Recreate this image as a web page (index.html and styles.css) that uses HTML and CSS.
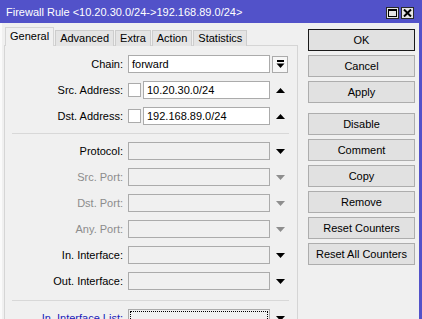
FILE: index.html
```html
<!DOCTYPE html>
<html lang="en">
<head>
  <meta charset="UTF-8" />
  <title>Firewall Rule</title>
  <link rel="stylesheet" href="styles.css">
</head>
<body>
  <!-- Title bar -->
  <div class="titlebar">
    <span class="title">Firewall Rule &lt;10.20.30.0/24-&gt;192.168.89.0/24&gt;</span>
    <div class="winbtns">
      <span class="winbtn">
        <svg width="9" height="8" viewBox="0 0 9 8"><rect x="0.5" y="0.5" width="8" height="7" fill="none" stroke="#000"/><rect x="0" y="0" width="9" height="2" fill="#000"/></svg>
      </span>
      <span class="winbtn">
        <svg width="9" height="8" viewBox="0 0 9 8"><path d="M1 0.5 L8 7.5 M8 0.5 L1 7.5" stroke="#000" stroke-width="2"/></svg>
      </span>
    </div>
  </div>

  <div class="main">
    <!-- Tabs + form -->
    <div class="left">
      <div class="tabs">
        <div class="tab active">General</div>
        <div class="tab">Advanced</div>
        <div class="tab">Extra</div>
        <div class="tab">Action</div>
        <div class="tab">Statistics</div>
      </div>

      <div class="panel">
        <div class="row first">
          <span class="lbl">Chain:</span>
          <div class="field"><div class="input white">forward</div></div>
          <div class="side">
            <span class="dropbtn">
              <svg width="9" height="9" viewBox="0 0 9 9"><rect x="1" y="0" width="7" height="2" fill="#000"/><polygon points="0.5,3.5 8.5,3.5 4.5,8" fill="#000"/></svg>
            </span>
          </div>
        </div>
        <div class="row">
          <span class="lbl">Src. Address:</span>
          <div class="field"><span class="check"></span><div class="input white grow">10.20.30.0/24</div></div>
          <div class="side"><svg class="arrow" width="9" height="5" viewBox="0 0 9 5"><polygon points="0,5 9,5 4.5,0" fill="#000"/></svg></div>
        </div>
        <div class="row">
          <span class="lbl">Dst. Address:</span>
          <div class="field"><span class="check"></span><div class="input white grow">192.168.89.0/24</div></div>
          <div class="side"><svg class="arrow" width="9" height="5" viewBox="0 0 9 5"><polygon points="0,5 9,5 4.5,0" fill="#000"/></svg></div>
        </div>

        <div class="sep sep-a"></div>

        <div class="row">
          <span class="lbl">Protocol:</span>
          <div class="field"><div class="input"></div></div>
          <div class="side"><svg class="arrow" width="9" height="5" viewBox="0 0 9 5"><polygon points="0,0 9,0 4.5,5" fill="#000"/></svg></div>
        </div>
        <div class="row">
          <span class="lbl dim">Src. Port:</span>
          <div class="field"><div class="input"></div></div>
          <div class="side"><svg class="arrow" width="9" height="5" viewBox="0 0 9 5"><polygon points="0,0 9,0 4.5,5" fill="#8e8e8e"/></svg></div>
        </div>
        <div class="row">
          <span class="lbl dim">Dst. Port:</span>
          <div class="field"><div class="input"></div></div>
          <div class="side"><svg class="arrow" width="9" height="5" viewBox="0 0 9 5"><polygon points="0,0 9,0 4.5,5" fill="#8e8e8e"/></svg></div>
        </div>
        <div class="row">
          <span class="lbl dim">Any. Port:</span>
          <div class="field"><div class="input"></div></div>
          <div class="side"><svg class="arrow" width="9" height="5" viewBox="0 0 9 5"><polygon points="0,0 9,0 4.5,5" fill="#8e8e8e"/></svg></div>
        </div>
        <div class="row">
          <span class="lbl">In. Interface:</span>
          <div class="field"><div class="input"></div></div>
          <div class="side"><svg class="arrow" width="9" height="5" viewBox="0 0 9 5"><polygon points="0,0 9,0 4.5,5" fill="#000"/></svg></div>
        </div>
        <div class="row">
          <span class="lbl">Out. Interface:</span>
          <div class="field"><div class="input"></div></div>
          <div class="side"><svg class="arrow" width="9" height="5" viewBox="0 0 9 5"><polygon points="0,0 9,0 4.5,5" fill="#000"/></svg></div>
        </div>

        <div class="sep sep-b"></div>

        <div class="row">
          <span class="lbl link">In. Interface List:</span>
          <div class="field"><div class="input focus"></div></div>
          <div class="side"><svg class="arrow" width="9" height="5" viewBox="0 0 9 5"><polygon points="0,0 9,0 4.5,5" fill="#000"/></svg></div>
        </div>
      </div>
    </div>

    <!-- Action buttons -->
    <div class="buttons">
      <div class="btn default">OK</div>
      <div class="btn">Cancel</div>
      <div class="btn">Apply</div>
      <div class="btn spaced">Disable</div>
      <div class="btn">Comment</div>
      <div class="btn">Copy</div>
      <div class="btn">Remove</div>
      <div class="btn">Reset Counters</div>
      <div class="btn">Reset All Counters</div>
    </div>
  </div>
</body>
</html>
```

FILE: styles.css
```css
* {
  box-sizing: border-box;
  margin: 0;
  padding: 0;
}

body {
  width: 422px;
  height: 319px;
  overflow: hidden;
  background: #f0f0f0;
  font-family: 'Liberation Sans', Arial, sans-serif;
  font-size: 11px;
  color: #000;
}

/* === TITLE BAR === */
.titlebar {
  height: 23px;
  background: #5252c9;
  color: #fff;
  display: flex;
  align-items: center;
  padding-left: 6px;
}

.title {
  flex: 1;
  white-space: nowrap;
}

.winbtns {
  display: flex;
  gap: 2px;
  margin-right: 8px;
  margin-top: 3px;
}

.winbtn {
  width: 13px;
  height: 12px;
  background: #e4e4e4;
  border: 1px solid #2a2a2a;
  display: flex;
  align-items: center;
  justify-content: center;
}

/* === MAIN AREA === */
.main {
  display: flex;
  height: 296px;
  border-left: 2px solid #fafafa;
  border-right: 3px solid #5252c9;
}

.left {
  width: 294px;
  margin-left: 2px;
  padding-top: 4px;
}

/* Tabs */
.tabs {
  display: flex;
  align-items: flex-end;
  height: 19px;
  gap: 1px;
  padding-left: 1px;
  position: relative;
  z-index: 1;
}

.tab {
  height: 16px;
  line-height: 15px;
  padding: 0 4px;
  background: #e4e4e4;
  border: 1px solid #cdcdcd;
  border-bottom: none;
  white-space: nowrap;
}

.tab.active {
  height: 19px;
  line-height: 17px;
  padding: 0 4px;
  background: #f0f0f0;
  border-color: #d5d5d5;
}

.panel {
  height: 280px;
  border: 1px solid #d5d5d5;
  margin-top: -1px;
  padding-top: 9px;
}

/* Form rows */
.row {
  display: flex;
  align-items: center;
  height: 18px;
  margin-top: 8px;
}

.row.first {
  margin-top: 0;
}

.lbl {
  width: 118px;
  margin-right: 5px;
  text-align: right;
  white-space: nowrap;
}

.lbl.dim {
  color: #8c8c8c;
}

.lbl.link {
  color: #1b1bb8;
}

.field {
  width: 142px;
  height: 18px;
  display: flex;
  align-items: center;
}

.side {
  width: 16px;
  margin-left: 2px;
  height: 18px;
  display: flex;
  align-items: center;
  justify-content: center;
}

.input {
  width: 100%;
  height: 18px;
  border: 1px solid #ababab;
  background: #f0f0f0;
  padding-left: 3px;
  line-height: 16px;
  white-space: nowrap;
}

.input.white {
  background: #fff;
}

.input.grow {
  flex: 1;
}

.input.focus {
  outline: 1px dotted #000;
  outline-offset: -3px;
}

.check {
  width: 13px;
  height: 14px;
  border: 1px solid #ababab;
  background: #fff;
  margin-right: 2px;
  flex-shrink: 0;
}

.dropbtn {
  width: 16px;
  height: 17px;
  border: 1px solid #ababab;
  background: #f7f7f7;
  display: flex;
  align-items: center;
  justify-content: center;
}

.sep {
  height: 1px;
  background: #d8d8d8;
  margin-left: 7px;
  width: 277px;
}

.sep-a {
  margin-top: 8px;
  margin-bottom: 1px;
}

.sep-b {
  margin-top: 10px;
}

/* === BUTTON COLUMN === */
.buttons {
  width: 107px;
  margin-left: 10px;
  padding-top: 6px;
  display: flex;
  flex-direction: column;
  gap: 4px;
}

.btn {
  height: 22px;
  line-height: 20px;
  text-align: center;
  background: #e1e1e1;
  border: 1px solid #adadad;
  white-space: nowrap;
}

.btn.default {
  border-color: #1a1a1a;
}

.btn.spaced {
  margin-top: 6px;
}
```
